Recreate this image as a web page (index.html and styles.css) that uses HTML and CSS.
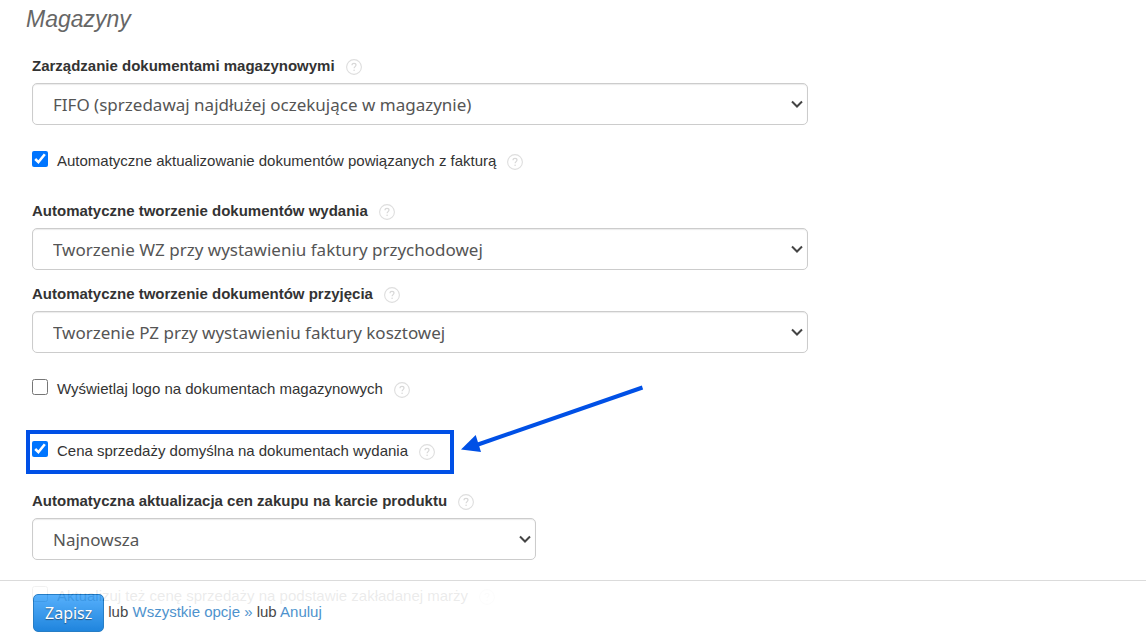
FILE: index.html
```
<!DOCTYPE html>
<html lang="pl">
<head>
    <meta charset="UTF-8">
    <meta name="viewport" content="width=device-width, initial-scale=1.0">
    <title>Magazyny</title>
    <link rel="stylesheet" href="styles.css">
</head>
<body>
    <svg class="defs" width="0" height="0" aria-hidden="true">
        <symbol id="help" viewBox="0 0 16 16">
            <circle cx="8" cy="8" r="7.4" fill="none" stroke="#dedede" stroke-width="1.1"/>
            <path d="M6 6.3C6 4.9 6.9 4.3 8 4.3s2 .7 2 1.800c0 1.500-1.900 1.600-1.900 3.200" fill="none" stroke="#d8d8d8" stroke-width="1.200"/>
            <circle cx="8.1" cy="11.2" r=".8" fill="#d8d8d8"/>
        </symbol>
    </svg>

    <form class="settings">
        <h2>Magazyny</h2>

        <div class="field">
            <div class="label">
                <label for="management">Zarządzanie dokumentami magazynowymi</label>
                <svg class="help"><use href="#help"/></svg>
            </div>
            <select id="management" name="management">
                <option>FIFO (sprzedawaj najdłużej oczekujące w magazynie)</option>
            </select>
        </div>

        <div class="check">
            <input type="checkbox" id="autoUpdate" name="autoUpdate" checked>
            <label for="autoUpdate">Automatyczne aktualizowanie dokumentów powiązanych z fakturą</label>
            <svg class="help"><use href="#help"/></svg>
        </div>

        <div class="field">
            <div class="label">
                <label for="issue">Automatyczne tworzenie dokumentów wydania</label>
                <svg class="help"><use href="#help"/></svg>
            </div>
            <select id="issue" name="issue">
                <option>Tworzenie WZ przy wystawieniu faktury przychodowej</option>
            </select>
        </div>

        <div class="field">
            <div class="label">
                <label for="receipt">Automatyczne tworzenie dokumentów przyjęcia</label>
                <svg class="help"><use href="#help"/></svg>
            </div>
            <select id="receipt" name="receipt">
                <option>Tworzenie PZ przy wystawieniu faktury kosztowej</option>
            </select>
        </div>

        <div class="check">
            <input type="checkbox" id="showLogo" name="showLogo">
            <label for="showLogo">Wyświetlaj logo na dokumentach magazynowych</label>
            <svg class="help"><use href="#help"/></svg>
        </div>

        <div class="check highlight">
            <input type="checkbox" id="defaultPrice" name="defaultPrice" checked>
            <label for="defaultPrice">Cena sprzedaży domyślna na dokumentach wydania</label>
            <svg class="help"><use href="#help"/></svg>
            <svg class="arrow" viewBox="0 0 184 72" aria-hidden="true">
                <path d="M18 60.5L182.5 3.5" stroke="#0050e6" stroke-width="4"/>
                <path d="M1 65.5L15.7 51L21 68Z" fill="#0050e6"/>
            </svg>
        </div>

        <div class="field">
            <div class="label">
                <label for="purchasePrice">Automatyczna aktualizacja cen zakupu na karcie produktu</label>
                <svg class="help"><use href="#help"/></svg>
            </div>
            <select id="purchasePrice" name="purchasePrice" class="short">
                <option>Najnowsza</option>
            </select>
        </div>

        <div class="check">
            <input type="checkbox" id="updateSale" name="updateSale">
            <label for="updateSale">Aktualizuj też cenę sprzedaży na podstawie zakładanej marży</label>
            <svg class="help"><use href="#help"/></svg>
        </div>
    </form>

    <div class="actions">
        <button type="submit">Zapisz</button>
        <span>lub <a href="#">Wszystkie opcje »</a> lub <a href="#">Anuluj</a></span>
    </div>
</body>
</html>
```
FILE: styles.css
```
* {
    box-sizing: border-box;
}

body {
    margin: 0;
    color: #333;
    background-color: white;
    font: 15px/22px "Liberation Sans", Arial, sans-serif;
}

.defs {
    position: absolute;
}

.settings {
    display: flow-root;
    max-width: 808px;
    padding: 4px 0 0 26px;
}

h2 {
    margin: 0 0 21px;
    color: #666;
    font: italic 23px/30px "Liberation Sans", Arial, sans-serif;
}

.field {
    margin-bottom: 13px;
    padding-left: 6px;
}

.label,
.check {
    display: flex;
    align-items: center;
}

.label {
    margin-bottom: 6px;
    font-weight: bold;
}

.help {
    flex: none;
    width: 16px;
    height: 16px;
    margin: 2px 0 0 11px;
}

select {
    display: block;
    width: 100%;
    height: 42px;
    padding: 0 30px 0 20px;
    border: 1px solid #ccc;
    border-radius: 5px;
    appearance: none;
    color: #555;
    background: white url("data:image/svg+xml,%3Csvg xmlns='http://www.w3.org/2000/svg' width='12' height='8'%3E%3Cpath d='M1 1.500L6 6.500L11 1.500' fill='none' stroke='%23444' stroke-width='2'/%3E%3C/svg%3E") no-repeat right 4px center;
    box-shadow: inset 0 1px 1px rgba(0, 0, 0, 0.08);
    font: 17px "Noto Sans", Tahoma, sans-serif;
}

select.short {
    width: 65%;
}

.check {
    margin: 25px 0 28px;
    padding-left: 6px;
}

.check input {
    width: 16px;
    height: 16px;
    margin: 0 9px 4px 0;
}

.highlight {
    position: relative;
    width: fit-content;
    margin: 30px 0 16px;
    padding: 6px 15px 8px 2px;
    border: 4px solid #0050e6;
}

.arrow {
    position: absolute;
    left: calc(100% + 10px);
    bottom: 14px;
    width: 184px;
    height: 72px;
}

.actions {
    position: fixed;
    right: 0;
    bottom: 0;
    left: 0;
    display: flex;
    gap: 4px;
    padding: 13px 33px 5px;
    border-top: 1px solid #d8d8d8;
    background-color: white;
    opacity: 0.9;
}

.actions span {
    padding-top: 7px;
}

.actions a {
    color: #3a87c8;
    text-decoration: none;
}

.actions button {
    height: 38px;
    padding: 0 11px;
    border: 1px solid #1070c0;
    border-radius: 5px;
    color: white;
    background: linear-gradient(#45a8fc, #0878da);
    font: 16px "Noto Sans", Tahoma, sans-serif;
    text-shadow: 0 1px 1px rgba(0, 0, 0, 0.5);
}
```
